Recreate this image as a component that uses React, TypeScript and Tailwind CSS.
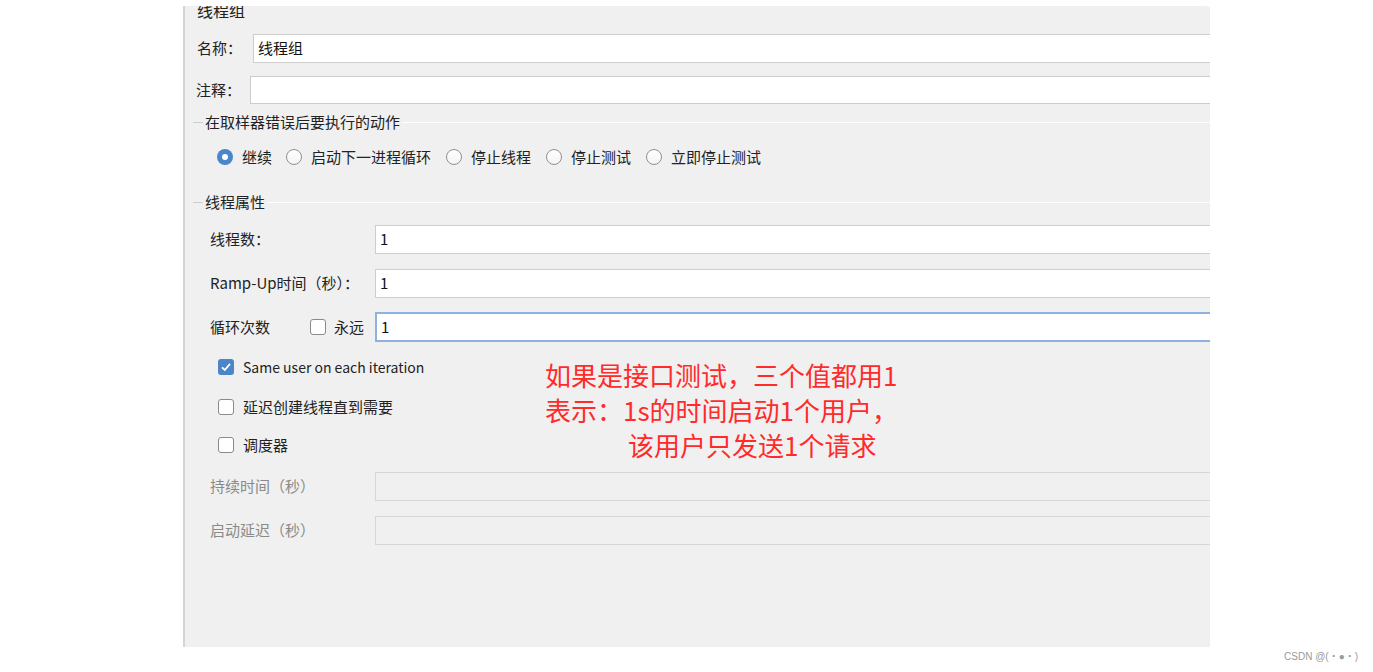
import React from 'react';

const font = { fontFamily: '"Noto Sans CJK SC", "Noto Sans", sans-serif' };

const Radio: React.FC<{ checked?: boolean; label: string }> = ({ checked, label }) => (
  <div className="flex items-center">
    {checked ? (
      <span className="w-[16px] h-[16px] rounded-full bg-[#4a86c8] flex items-center justify-center">
        <span className="w-[6px] h-[6px] rounded-full bg-white" />
      </span>
    ) : (
      <span className="w-[16px] h-[16px] rounded-full border border-[#8f8f8f] bg-gradient-to-b from-white to-[#f4f4f4]" />
    )}
    <span className="ml-[9px] text-[#222]">{label}</span>
  </div>
);

const Check: React.FC<{ checked?: boolean }> = ({ checked }) =>
  checked ? (
    <span className="w-[16px] h-[16px] rounded-[3px] bg-[#4a86c8] flex items-center justify-center">
      <svg width="12" height="12" viewBox="0 0 12 12">
        <path d="M2 6.3 L4.8 9 L10 2.8" fill="none" stroke="white" strokeWidth="1.8" />
      </svg>
    </span>
  ) : (
    <span className="w-[16px] h-[16px] rounded-[3px] border border-[#8a8a8a] bg-white" />
  );

const Legend: React.FC<{ title: string }> = ({ title }) => (
  <div className="flex items-center h-[20px]">
    <span className="ml-[8px] w-[10px] h-px bg-[#cfcfcf]" />
    <span className="px-[2px] text-[#222]">{title}</span>
    <span className="flex-1 h-px bg-[#cfcfcf] border-b border-white" />
  </div>
);

const Field: React.FC<{ value?: string; focus?: boolean; disabled?: boolean }> = ({ value, focus, disabled }) => (
  <div
    className={`flex-1 h-full -mr-[6px] flex items-center pl-[4px] ${
      focus
        ? 'border-2 border-[#8db2e2] bg-white'
        : disabled
        ? 'border border-[#d6d6d6] bg-[#f0f0f0]'
        : 'border border-[#cdcdcd] bg-white'
    }`}
  >
    <span className="text-[#111]">{value}</span>
  </div>
);

export default function App() {
  return (
    <div className="w-[1373px] h-[672px] bg-white relative overflow-hidden text-[15px]" style={font}>
      <div className="ml-[183px] mt-[6px] w-[1027px] h-[641px] bg-[#f0f0f0] border-l-2 border-[#d4d4d4] rounded-tr-[3px] overflow-hidden flex flex-col">
        <div className="h-[12px] leading-[8px] text-[16px] pl-[12px] text-[#222]">线程组</div>

        <div className="mt-[16px] h-[29px] flex items-center pl-[12px]">
          <span className="w-[56px] text-[#222]">名称：</span>
          <Field value="线程组" />
        </div>
        <div className="mt-[13px] h-[28px] flex items-center pl-[11px]">
          <span className="w-[54px] text-[#222]">注释：</span>
          <Field />
        </div>

        <div className="mt-[8px]">
          <Legend title="在取样器错误后要执行的动作" />
        </div>
        <div className="mt-[15px] h-[20px] flex items-center pl-[32px]">
          <div className="w-[69px]"><Radio checked label="继续" /></div>
          <div className="w-[160px]"><Radio label="启动下一进程循环" /></div>
          <div className="w-[100px]"><Radio label="停止线程" /></div>
          <div className="w-[100px]"><Radio label="停止测试" /></div>
          <Radio label="立即停止测试" />
        </div>

        <div className="mt-[25px]">
          <Legend title="线程属性" />
        </div>
        <div className="mt-[13px] h-[29px] flex items-center pl-[25px]">
          <span className="w-[165px] text-[#222]">线程数：</span>
          <Field value="1" />
        </div>
        <div className="mt-[15px] h-[29px] flex items-center pl-[25px]">
          <span className="w-[165px] text-[#222]">Ramp-Up时间（秒）：</span>
          <Field value="1" />
        </div>
        <div className="mt-[14px] h-[30px] flex items-center pl-[25px]">
          <span className="w-[100px] text-[#222]">循环次数</span>
          <Check />
          <span className="ml-[8px] w-[41px] text-[#222]">永远</span>
          <Field value="1" focus />
        </div>

        <div className="mt-[15px] h-[20px] flex items-center pl-[33px]">
          <Check checked />
          <span className="ml-[9px] text-[14px] text-[#222]">Same user on each iteration</span>
        </div>
        <div className="mt-[20px] h-[20px] flex items-center pl-[33px]">
          <Check />
          <span className="ml-[9px] text-[#222]">延迟创建线程直到需要</span>
        </div>
        <div className="mt-[18px] h-[20px] flex items-center pl-[33px]">
          <Check />
          <span className="ml-[9px] text-[#222]">调度器</span>
        </div>

        <div className="mt-[17px] h-[29px] flex items-center pl-[25px]">
          <span className="w-[165px] text-[#8a8a8a]">持续时间（秒）</span>
          <Field disabled />
        </div>
        <div className="mt-[15px] h-[29px] flex items-center pl-[25px]">
          <span className="w-[165px] text-[#8a8a8a]">启动延迟（秒）</span>
          <Field disabled />
        </div>
      </div>

      <div className="mt-[4px] h-[12px] leading-[12px] flex justify-end pr-[15px] text-[10px] text-[#9a9a9a]" style={{ fontFamily: '"Liberation Sans", "Noto Sans CJK SC", sans-serif' }}>
        CSDN @(・●・)
      </div>

      <div className="absolute left-[545px] top-[357px] text-[26px] leading-[35px] text-[#ff2b2b]">
        <div>如果是接口测试，三个值都用1</div>
        <div>表示：1s的时间启动1个用户，</div>
        <div className="ml-[83px]">该用户只发送1个请求</div>
      </div>
    </div>
  );
}
